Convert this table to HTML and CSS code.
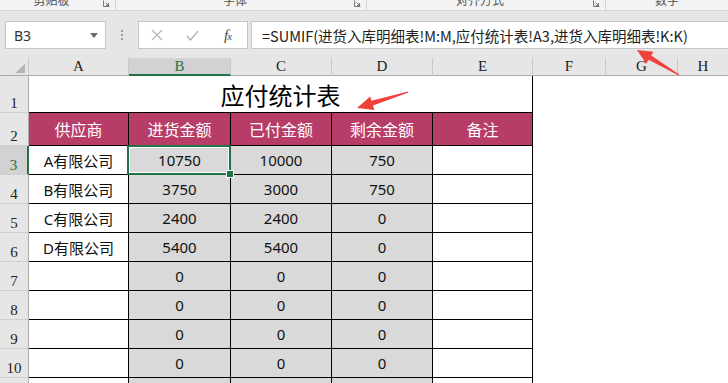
FILE: index.html
```html
<!DOCTYPE html>
<html lang="zh">
<head>
<meta charset="utf-8">
<title>应付统计表</title>
<link rel="stylesheet" href="styles.css">
</head>
<body>
<div class="app">
  <div class="ribbon">
    <div class="grp g1"><span class="lbl">剪贴板</span><svg class="launch" width="7" height="7" viewBox="0 0 7 7"><path d="M0.5 0.5V6.5H6.5" fill="none" stroke="#777"/><path d="M2.5 2.5L5.5 5.5M5.5 3V5.5H3" fill="none" stroke="#777"/></svg></div>
    <div class="grp g2"><span class="lbl">字体</span><svg class="launch" width="7" height="7" viewBox="0 0 7 7"><path d="M0.5 0.5V6.5H6.5" fill="none" stroke="#777"/><path d="M2.5 2.5L5.5 5.5M5.5 3V5.5H3" fill="none" stroke="#777"/></svg></div>
    <div class="grp g3"><span class="lbl">对齐方式</span><svg class="launch" width="7" height="7" viewBox="0 0 7 7"><path d="M0.5 0.5V6.5H6.5" fill="none" stroke="#777"/><path d="M2.5 2.5L5.5 5.5M5.5 3V5.5H3" fill="none" stroke="#777"/></svg></div>
    <div class="grp g4"><span class="lbl">数字</span></div>
  </div>

  <div class="fbar">
    <div class="namebox"><span>B3</span><svg width="8" height="5" viewBox="0 0 8 5"><path d="M0 0H8L4 5Z" fill="#6b6b6b"/></svg></div>
    <div class="grip"><i></i><i></i><i></i></div>
    <div class="fbtns">
      <svg class="ico" width="12" height="12" viewBox="0 0 12 12"><path d="M1 1L11 11M11 1L1 11" stroke="#b5b5b5" stroke-width="1.3" fill="none"/></svg>
      <svg class="ico" width="13" height="11" viewBox="0 0 13 11"><path d="M1 6L4.5 10L12 1" stroke="#b5b5b5" stroke-width="1.4" fill="none"/></svg>
      <span class="fx">f<span class="fxx">x</span></span>
    </div>
    <div class="finput">=SUMIF(进货入库明细表!M:M,应付统计表!A3,进货入库明细表!K:K)</div>
  </div>

  <div class="sheet">
    <div class="ch corner"><svg width="10" height="9" viewBox="0 0 10 9"><path d="M10 0V9H0Z" fill="#b4b4b4"/></svg></div>
    <div class="ch">A</div>
    <div class="ch on">B</div>
    <div class="ch">C</div>
    <div class="ch">D</div>
    <div class="ch">E</div>
    <div class="ch">F</div>
    <div class="ch">G</div>
    <div class="ch last">H</div>

    <div class="rh">1</div>
    <div class="c title">应付统计表</div>
    <div class="blank"></div>

    <div class="rh">2</div>
    <div class="c th">供应商</div>
    <div class="c th">进货金额</div>
    <div class="c th">已付金额</div>
    <div class="c th">剩余金额</div>
    <div class="c th">备注</div>
    <div class="blank"></div>

    <div class="rh on">3</div>
    <div class="c">A有限公司</div>
    <div class="c g sel">10750</div>
    <div class="c g">10000</div>
    <div class="c g">750</div>
    <div class="c"></div>
    <div class="blank"></div>

    <div class="rh">4</div>
    <div class="c">B有限公司</div>
    <div class="c g">3750</div>
    <div class="c g">3000</div>
    <div class="c g">750</div>
    <div class="c"></div>
    <div class="blank"></div>

    <div class="rh">5</div>
    <div class="c">C有限公司</div>
    <div class="c g">2400</div>
    <div class="c g">2400</div>
    <div class="c g">0</div>
    <div class="c"></div>
    <div class="blank"></div>

    <div class="rh">6</div>
    <div class="c">D有限公司</div>
    <div class="c g">5400</div>
    <div class="c g">5400</div>
    <div class="c g">0</div>
    <div class="c"></div>
    <div class="blank"></div>

    <div class="rh">7</div>
    <div class="c"></div>
    <div class="c g">0</div>
    <div class="c g">0</div>
    <div class="c g">0</div>
    <div class="c"></div>
    <div class="blank"></div>

    <div class="rh">8</div>
    <div class="c"></div>
    <div class="c g">0</div>
    <div class="c g">0</div>
    <div class="c g">0</div>
    <div class="c"></div>
    <div class="blank"></div>

    <div class="rh">9</div>
    <div class="c"></div>
    <div class="c g">0</div>
    <div class="c g">0</div>
    <div class="c g">0</div>
    <div class="c"></div>
    <div class="blank"></div>

    <div class="rh">10</div>
    <div class="c"></div>
    <div class="c g">0</div>
    <div class="c g">0</div>
    <div class="c g">0</div>
    <div class="c"></div>
    <div class="blank"></div>

    <div class="rh">11</div>
    <div class="c"></div>
    <div class="c g"></div>
    <div class="c g"></div>
    <div class="c g"></div>
    <div class="c"></div>
    <div class="blank"></div>
  </div>

  <svg class="arrows" width="728" height="383" viewBox="0 0 728 383">
    <polygon points="408,91.5 371.5,100.8 370.2,96.5 357,108 374.3,109.9 373,105.6 408.4,92.5" fill="#f0413a"/>
    <polygon points="679.3,74.5 651.2,55.6 653.5,51.7 637,50 646.3,63.7 648.6,59.8 678.7,75.5" fill="#f0413a"/>
  </svg>
</div>
</body>
</html>
```

FILE: styles.css
```css
* { box-sizing: border-box; }
html, body { margin: 0; padding: 0; }
body {
  width: 728px;
  height: 383px;
  overflow: hidden;
  background: #e6e6e6;
  font-family: "Noto Sans", "Noto Sans CJK SC", sans-serif;
}
.app {
  position: relative;
  width: 728px;
  height: 383px;
  overflow: hidden;
}

/* ribbon (cut) */
.ribbon {
  display: grid;
  grid-template-columns: 116px 251px 239px 1fr;
  height: 11px;
  background: #f3f3f3;
  border-bottom: 1px solid #d6d6d6;
  overflow: hidden;
}
.grp {
  display: grid;
  grid-template-columns: 1fr auto;
  align-items: start;
  border-right: 1px solid #d4d4d4;
  height: 10px;
}
.g4 { border-right: none; }
.lbl {
  justify-self: center;
  margin-top: -7px;
  font-family: "Noto Sans CJK SC", sans-serif;
  font-size: 12px;
  line-height: 14px;
  color: #555;
}
.launch { margin: 0 5px 0 0; }

/* formula bar */
.fbar {
  display: flex;
  align-items: stretch;
  height: 28px;
  margin-top: 10px;
}
.namebox {
  margin-left: 5px;
  width: 101px;
  background: #fff;
  border: 1px solid #c6c6c6;
  display: flex;
  align-items: center;
  justify-content: space-between;
  padding: 0 7px 0 8px;
  font-family: "Noto Sans", sans-serif;
  font-size: 14px;
  color: #333;
}
.grip {
  width: 32px;
  display: flex;
  flex-direction: column;
  align-items: center;
  justify-content: center;
  gap: 2px;
}
.grip i {
  display: block;
  width: 2px;
  height: 2px;
  background: #9c9c9c;
}
.fbtns {
  width: 110px;
  background: #fff;
  border: 1px solid #c6c6c6;
  display: flex;
  align-items: center;
  padding-left: 12px;
  gap: 0;
}
.fbtns .ico:nth-child(1) { margin-right: 23px; }
.fbtns .ico:nth-child(2) { margin-right: 25px; }
.fx {
  font-family: "Liberation Serif", serif;
  font-style: italic;
  font-size: 15px;
  color: #444;
  letter-spacing: -1px;
}
.fxx { font-size: 11px; }
.finput {
  flex: 1;
  margin-left: 3px;
  background: #fff;
  border: 1px solid #c6c6c6;
  border-right: none;
  padding-left: 10px;
  display: flex;
  align-items: center;
  font-family: "Noto Sans CJK SC", sans-serif;
  font-size: 14.5px;
  color: #222;
  white-space: nowrap;
}

/* sheet */
.sheet {
  margin-top: 9px;
  display: grid;
  grid-template-columns: 29px 100px 102px 101px 101px 100px 73px 72px 1fr;
  grid-template-rows: 18px 37px 33px repeat(9, 29px);
  background: #fff;
}
.ch {
  background: #e6e6e6;
  border-right: 1px solid #c9c9c9;
  border-bottom: 1px solid #ababab;
  display: flex;
  align-items: center;
  justify-content: center;
  font-family: "Liberation Serif", serif;
  font-size: 15px;
  color: #222;
}
.ch.last { border-right: none; }
.ch.on {
  background: #d2d2d2;
  color: #217346;
  border-bottom: 2px solid #217346;
}
.corner {
  align-items: flex-end;
  justify-content: flex-end;
  padding: 0 3px 2px 0;
}
.rh {
  background: #e6e6e6;
  border-right: 1px solid #ababab;
  border-bottom: 1px solid #cfcfcf;
  display: flex;
  align-items: flex-end;
  justify-content: center;
  padding-bottom: 0;
  font-family: "Liberation Serif", serif;
  font-size: 15px;
  line-height: 17px;
  color: #222;
}
.rh.on {
  background: #d2d2d2;
  color: #217346;
  border-right: 2px solid #217346;
}
.c {
  border-right: 1px solid #000;
  border-bottom: 1px solid #000;
  display: flex;
  align-items: center;
  justify-content: center;
  font-size: 15px;
  color: #111;
  background: #fff;
}
.g { background: #d9d9d9; }
.th {
  background: #b83c68;
  color: #fff;
  font-family: "Noto Sans CJK SC", sans-serif;
  font-size: 16px;
}
.title {
  grid-column: span 5;
  align-items: flex-end;
  padding-bottom: 1px;
  font-family: "Noto Sans CJK SC", sans-serif;
  font-size: 24px;
  line-height: 32px;
  color: #000;
}
.blank {
  grid-column: span 3;
  background: #fff;
}
.sel { position: relative; }
.sel::after {
  content: "";
  position: absolute;
  left: -2px;
  top: -1px;
  right: -1px;
  bottom: -1px;
  border: 2px solid #217346;
  box-shadow: inset 0 0 0 1px #fff;
}
.sel::before {
  content: "";
  position: absolute;
  right: -4px;
  bottom: -4px;
  width: 6px;
  height: 6px;
  background: #217346;
  border: 1px solid #fff;
  z-index: 1;
}

.arrows {
  position: absolute;
  left: 0;
  top: 0;
  pointer-events: none;
}
```
